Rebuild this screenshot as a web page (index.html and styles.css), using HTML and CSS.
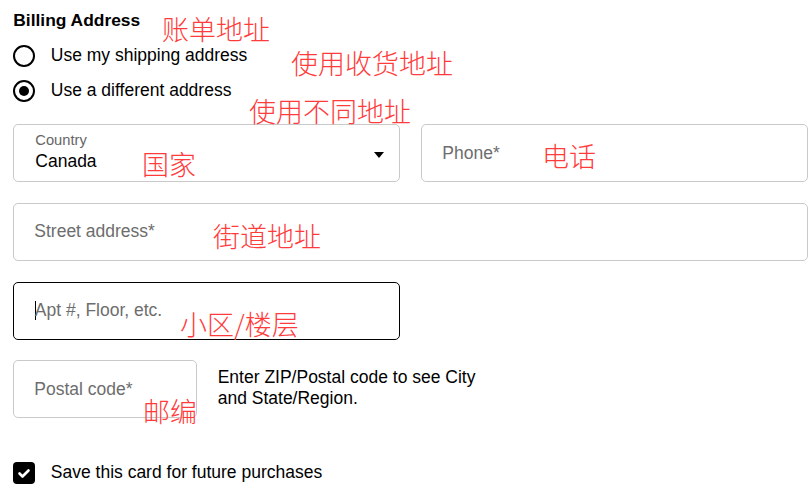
FILE: index.html
```html
<!DOCTYPE html>
<html lang="en">
<head>
<meta charset="utf-8">
<title>Billing Address</title>
<link rel="stylesheet" href="styles.css">
</head>
<body>
<div class="page">
  <form class="billing">
    <h2 class="title">Billing Address</h2>
    <div class="radios">
      <label class="radio-row"><span class="radio"></span><span>Use my shipping address</span></label>
      <label class="radio-row"><span class="radio checked"><span class="dot"></span></span><span>Use a different address</span></label>
    </div>
    <div class="fields">
      <div class="field select">
        <div class="select-text">
          <div class="select-label">Country</div>
          <div class="select-value">Canada</div>
        </div>
        <span class="arrow"></span>
      </div>
      <div class="field"><span class="ph">Phone*</span></div>
      <div class="field wide"><span class="ph">Street address*</span></div>
      <div class="field focused"><span class="caret"></span><span class="ph">Apt #, Floor, etc.</span></div>
    </div>
    <div class="postal-row">
      <div class="field postal"><span class="ph">Postal code*</span></div>
      <p class="hint">Enter ZIP/Postal code to see City<br>and State/Region.</p>
    </div>
    <label class="check-row">
      <span class="checkbox">
        <svg width="22" height="22" viewBox="0 0 22 22"><polyline points="6.5,11.5 9.5,14.5 15.5,8.5" fill="none" stroke="#fff" stroke-width="2.6" stroke-linecap="round" stroke-linejoin="round"/></svg>
      </span>
      <span>Save this card for future purchases</span>
    </label>
  </form>

  <span class="note n1">账单地址</span>
  <span class="note n2">使用收货地址</span>
  <span class="note n3">使用不同地址</span>
  <span class="note n4">国家</span>
  <span class="note n5">电话</span>
  <span class="note n6">街道地址</span>
  <span class="note n7">小区/楼层</span>
  <span class="note n8">邮编</span>
</div>
</body>
</html>
```
FILE: styles.css
```css
html, body {
  margin: 0;
  padding: 0;
  background: #fff;
}

.page {
  position: relative;
  width: 809px;
  height: 500px;
  overflow: hidden;
  font-family: "Liberation Sans", Arial, sans-serif;
  color: #000;
}

.billing {
  padding: 9.5px 0 0 13.3px;
  width: 795px;
  font-size: 17.5px;
  line-height: 21px;
}

.title {
  margin: 0;
  font-size: 17.4px;
  line-height: 21px;
  font-weight: bold;
}

.radios {
  margin-top: 7.7px;
  display: flex;
  flex-direction: column;
}

.radio-row {
  height: 35px;
  display: flex;
  align-items: center;
  gap: 15.5px;
}

.radio {
  box-sizing: border-box;
  width: 22px;
  height: 22px;
  border: 2.5px solid #000;
  border-radius: 50%;
  display: flex;
  align-items: center;
  justify-content: center;
  flex: none;
}

.dot {
  width: 10px;
  height: 10px;
  border-radius: 50%;
  background: #000;
}

.fields {
  margin-top: 16.1px;
  display: grid;
  grid-template-columns: 1fr 1fr;
  column-gap: 21px;
  row-gap: 20.7px;
}

.field {
  box-sizing: border-box;
  height: 58px;
  border: 1px solid #c9c9c9;
  border-radius: 5px;
  padding: 0 20px;
  display: flex;
  align-items: center;
}

.field.wide {
  grid-column: 1 / 3;
}

.field.focused {
  border-color: #000;
}

.ph {
  color: #6d6d6d;
}

.caret {
  display: inline-block;
  width: 1px;
  height: 19px;
  background: #000;
  margin-right: -1px;
  margin-left: 0.5px;
}

.field.select {
  align-items: flex-start;
  justify-content: space-between;
  padding: 7px 15px 0 21px;
}

.select-label {
  font-size: 14.7px;
  line-height: 17px;
  color: #666;
}

.select-value {
  margin-top: 1.4px;
  line-height: 21px;
}

.arrow {
  width: 0;
  height: 0;
  border-left: 5px solid transparent;
  border-right: 5px solid transparent;
  border-top: 6px solid #000;
  margin-top: 20px;
}

.postal-row {
  margin-top: 20.7px;
  display: flex;
  align-items: flex-start;
  gap: 21px;
}

.field.postal {
  width: 183.4px;
  flex: none;
}

.hint {
  margin: 7px 0 0;
  line-height: 21px;
}

.check-row {
  margin-top: 43.6px;
  height: 22px;
  display: flex;
  align-items: center;
  gap: 15.5px;
}

.checkbox {
  width: 22px;
  height: 22px;
  border-radius: 4px;
  background: #000;
  flex: none;
  display: flex;
}

.note {
  position: absolute;
  font-family: "Noto Sans CJK SC", sans-serif;
  font-weight: 300;
  font-size: 27px;
  line-height: 27px;
  color: #ff3b3b;
  white-space: nowrap;
}

.n1 { left: 162px; top: 15px; }
.n2 { left: 291px; top: 49px; }
.n3 { left: 249px; top: 97px; }
.n4 { left: 142px; top: 150px; }
.n5 { left: 542px; top: 142px; }
.n6 { left: 213px; top: 222px; }
.n7 { left: 180px; top: 310px; }
.n8 { left: 143px; top: 397px; }
```
